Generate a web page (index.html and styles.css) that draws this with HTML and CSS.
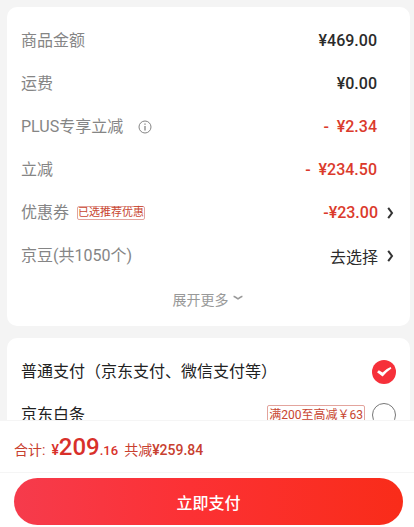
FILE: index.html
```
<!DOCTYPE html>
<html lang="zh-CN">
<head>
  <meta charset="UTF-8">
  <meta name="viewport" content="width=device-width, initial-scale=1">
  <title>确认订单</title>
  <link rel="stylesheet" href="styles.css">
</head>
<body>
    <main class="content">

        <section class="card">
            <div class="row">
                <span class="label">商品金额</span>
                <span class="price">¥469.00</span>
            </div>
            <div class="row">
                <span class="label">运费</span>
                <span class="price">¥0.00</span>
            </div>
            <div class="row">
                <span class="label">PLUS专享立减</span>
                <button class="info" type="button" aria-label="说明">
                    <svg width="14" height="14" viewBox="0 0 14 14" fill="none" stroke="#858585">
                        <circle cx="7" cy="7" r="6"/>
                        <path d="M7 3.4v1.3M7 6v4.4" stroke-width="1.3"/>
                    </svg>
                </button>
                <span class="price red">-&nbsp; ¥2.34</span>
            </div>
            <div class="row">
                <span class="label">立减</span>
                <span class="price red">-&nbsp; ¥234.50</span>
            </div>
            <div class="row">
                <span class="label">优惠券</span>
                <span class="tag">已选推荐优惠</span>
                <button class="link price red" type="button">-¥23.00
                    <svg width="7" height="12" viewBox="0 0 7 12" fill="none" stroke="#333" stroke-width="2">
                        <path d="M1.2 .8 5 6 1.2 11.2"/>
                    </svg>
                </button>
            </div>
            <div class="row">
                <span class="label">京豆(共1050个)</span>
                <button class="link choose" type="button">去选择
                    <svg width="7" height="12" viewBox="0 0 7 12" fill="none" stroke="#333" stroke-width="2">
                        <path d="M1.2 .8 5 6 1.2 11.2"/>
                    </svg>
                </button>
            </div>
            <div class="row">
                <button class="more" type="button">展开更多
                    <svg width="10" height="8" viewBox="0 0 10 8" fill="none" stroke="#999" stroke-width="1.5">
                        <path d="M.6 1.2Q2.4 1.8 5 3.8 7.6 1.8 9.4 1.2"/>
                    </svg>
                </button>
            </div>
        </section>

        <section class="card card-pay">
            <div class="row">
                <label class="pay" for="pay-normal">普通支付（京东支付、微信支付等）</label>
                <span class="radio">
                    <input type="radio" name="pay" id="pay-normal" checked>
                    <svg class="check" width="24" height="24" viewBox="0 0 24 24">
                        <path d="M5 12.2 6.8 10.2 10.6 12.4Q14.5 8.6 18.6 7L19.4 8.4Q14.6 11.6 10.6 16.4z" fill="#fff"/>
                    </svg>
                </span>
            </div>
            <div class="row">
                <label class="pay" for="pay-baitiao">京东白条</label>
                <span class="tag tag-big">满200至高减￥63</span>
                <span class="radio">
                    <input type="radio" name="pay" id="pay-baitiao">
                </span>
            </div>
        </section>

    </main>

    <footer class="footer">
        <div class="total">
            <span>合计:</span>
            <span class="sum">¥<b>209</b><small>.16</small></span>
            <span>共减<span class="saved">¥259.84</span></span>
        </div>
        <div class="submit">
            <button type="button">立即支付</button>
        </div>
    </footer>
</body>
</html>
```
FILE: styles.css
```
* {
    box-sizing: border-box;
}

body {
    font-family: Roboto, "Noto Sans CJK SC", sans-serif;
    margin: 0;
    display: flex;
    flex-direction: column;
    height: 100vh;
    background-color: #f4f4f4;
    color: #2b2b2b;
}

button {
    font-family: inherit;
    margin: 0;
    padding: 0;
    border: none;
    background: none;
    cursor: pointer;
}

svg {
    display: block;
}

.content {
    flex: 1;
    min-height: 0;
    overflow: hidden;
    padding: 7px 4px 0 7px;
}

.card {
    background-color: white;
    border-radius: 10px;
    padding: 12px 16px 6px 14px;
    margin-bottom: 12px;
}

.card-pay {
    padding-right: 14px;
}

.row {
    display: flex;
    align-items: center;
    height: 43px;
    font-size: 16px;
    line-height: 24px;
}

.label {
    color: #858585;
}

.price {
    margin-left: auto;
    padding-right: 17px;
    font-size: 16px;
    font-weight: 500;
}

.red {
    color: #db3a2c;
}

.info {
    margin-left: 15px;
}

.tag {
    margin-left: 8px;
    border: 1px solid #e3a49d;
    border-radius: 2px;
    color: #c8452f;
    font-size: 11px;
    line-height: 12px;
}

.tag-big {
    margin-left: auto;
    margin-right: 7px;
    padding: 0 1px;
    font-size: 12px;
    line-height: 18px;
}

.link {
    display: flex;
    align-items: center;
    gap: 9px;
    margin-left: auto;
    padding: 0;
}

.choose {
    color: #2b2b2b;
    font-size: 16px;
}

.more {
    display: flex;
    align-items: center;
    gap: 4px;
    margin: 0 auto;
    color: #999;
    font-size: 14px;
}

.pay {
    color: #222;
}

.radio {
    display: grid;
    margin-left: auto;
}

.tag + .radio {
    margin-left: 0;
}

.radio input {
    grid-area: 1 / 1;
    appearance: none;
    width: 24px;
    height: 24px;
    margin: 0;
    border: 1px solid #777;
    border-radius: 50%;
}

.radio input:checked {
    border: none;
    background-color: #f6303a;
}

.check {
    grid-area: 1 / 1;
    pointer-events: none;
}

.footer {
    background-color: white;
    border-top: 1px solid #f5f5f5;
}

.total {
    display: flex;
    align-items: baseline;
    gap: 6px;
    height: 52px;
    padding: 10px 14px;
    border-bottom: 1px solid #f5f5f5;
    color: #c8402f;
    font-size: 14px;
    line-height: 32px;
}

.sum {
    color: #d8302a;
    font-weight: 500;
}

.sum b {
    font-size: 24px;
    font-weight: 500;
}

.sum small {
    font-size: 13px;
}

.saved {
    font-weight: 500;
}

.submit {
    padding: 5px 11px 2px 14px;
}

.submit button {
    width: 100%;
    height: 47px;
    border-radius: 24px;
    background: linear-gradient(90deg, #f63b4c, #fc3134 45%, #f92c19);
    color: white;
    font-size: 16px;
    font-weight: 500;
}
```
